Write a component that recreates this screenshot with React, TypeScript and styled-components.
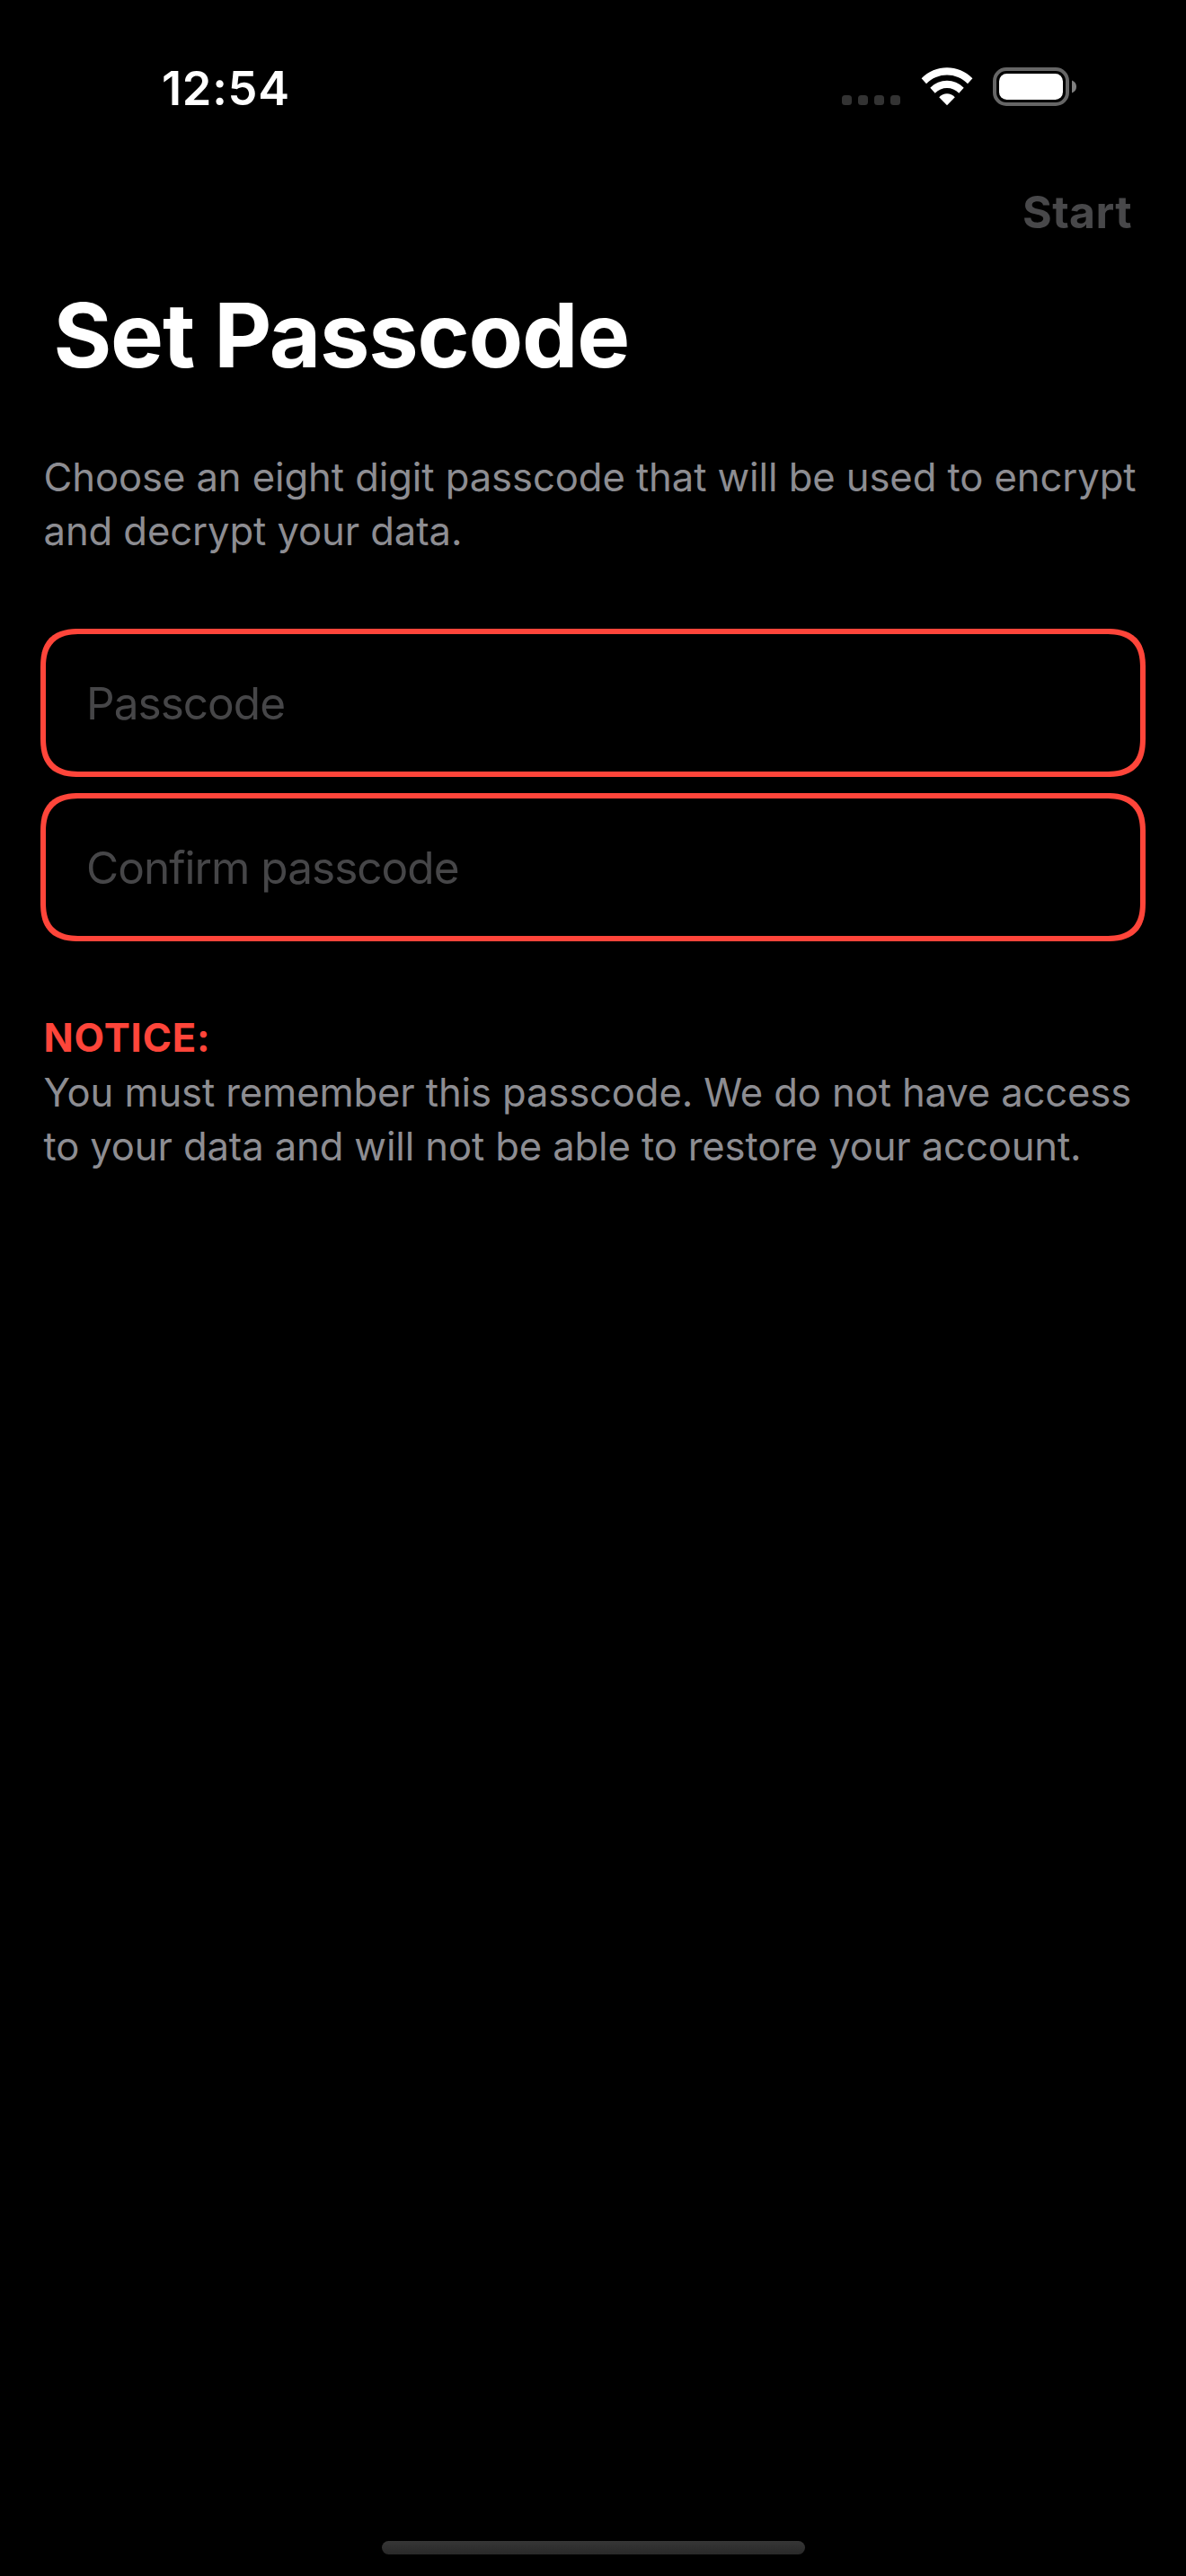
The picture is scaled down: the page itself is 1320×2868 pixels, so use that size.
import React, { useState } from "react";
import styled, { createGlobalStyle } from "styled-components";

const colors = {
  background: "#000000",
  title: "#ffffff",
  secondary: "#8d8d92",
  disabled: "#48484a",
  placeholder: "#464648",
  danger: "#ff453a",
};

const GlobalStyle = createGlobalStyle`
  html, body {
    margin: 0;
    background: ${colors.background};
  }
  * {
    box-sizing: border-box;
  }
`;

const Screen = styled.div`
  display: flex;
  flex-direction: column;
  width: 1320px;
  height: 2868px;
  overflow: hidden;
  background: ${colors.background};
  font-family: Inter, "Liberation Sans", sans-serif;
`;

const StatusBar = styled.header`
  display: flex;
  justify-content: space-between;
  align-items: flex-start;
  height: 177px;
  padding: 67px 121px 0 180px;
`;

const Clock = styled.time`
  font-size: 52.3px;
  font-weight: 600;
  line-height: 62px;
  letter-spacing: 0.75px;
  color: ${colors.title};
`;

const StatusIcons = styled.div`
  display: flex;
  align-items: flex-end;
  padding-top: 8px;
  height: 51px;
`;

const SignalDots = styled.div`
  display: flex;
  gap: 7px;
  margin: 0 23px 1px 0;
`;

const Dot = styled.span`
  width: 11px;
  height: 11px;
  border-radius: 3.5px;
  background: #333333;
`;

const WifiIcon = styled.svg`
  display: block;
  width: 58px;
  height: 43px;
  margin-right: 22px;
`;

const BatteryIcon = styled.svg`
  display: block;
  width: 94px;
  height: 43px;
`;

const NavBar = styled.nav`
  display: flex;
  justify-content: flex-end;
  height: 136px;
  padding: 29px 60px 0 0;
`;

const StartButton = styled.button`
  height: 60px;
  padding: 0;
  border: 0;
  background: none;
  font-family: inherit;
  font-size: 50px;
  font-weight: 700;
  line-height: 60px;
  letter-spacing: 0.4px;
  color: ${colors.disabled};
`;

const Title = styled.h1`
  margin: 0 0 69px;
  padding-left: 59.5px;
  font-size: 99px;
  font-weight: 700;
  line-height: 120px;
  letter-spacing: -1.21px;
  color: ${colors.title};
`;

const Form = styled.main`
  display: flex;
  flex-direction: column;
  flex: 1;
  gap: 78px;
  padding: 0 45px;
`;

const Paragraph = styled.p<{ $leading: number; $tracking: number }>`
  margin: 0;
  padding-left: 3.5px;
  font-size: 43.6px;
  line-height: ${(p) => p.$leading}px;
  letter-spacing: ${(p) => p.$tracking}px;
  white-space: nowrap;
  color: ${colors.secondary};
`;

const NoticeLabel = styled.strong`
  font-weight: 700;
  letter-spacing: 0.85px;
  color: ${colors.danger};
`;

const Fields = styled.div`
  display: flex;
  flex-direction: column;
  gap: 18px;
`;

const Field = styled.input`
  width: 100%;
  height: 165px;
  padding: 0 45px;
  border: 6px solid ${colors.danger};
  border-radius: 44px;
  corner-shape: superellipse(1.38);
  outline: none;
  background: transparent;
  font-family: inherit;
  font-size: 49.5px;
  letter-spacing: -0.97px;
  color: ${colors.title};

  &::placeholder {
    color: ${colors.placeholder};
    opacity: 1;
  }
`;

const HomeArea = styled.footer`
  display: flex;
  justify-content: center;
  padding-bottom: 24px;
`;

const HomeIndicator = styled.div`
  width: 471px;
  height: 15px;
  border-radius: 8px;
  background: linear-gradient(#363636, #292929);
`;

function Wifi() {
  return (
    <WifiIcon viewBox="0 0 58 43" fill="#fff" aria-label="Wi-Fi">
      <path d="M0.6 12.2C16 -3.9 42 -3.9 57.4 12.2L52 18.3C39.5 5.2 18.5 5.2 6 18.3Z" />
      <path d="M10.3 22.7C20.5 12 37.5 12 47.7 22.7L42.3 28.7C35 21.2 23 21.2 15.7 28.7Z" />
      <path d="M20.2 33.2C25 28 33 28 37.8 33.2L29 42.3Z" />
    </WifiIcon>
  );
}

function Battery() {
  return (
    <BatteryIcon viewBox="0 0 94 43" aria-label="Battery">
      <rect x="2" y="2" width="81" height="39" rx="13" fill="none" stroke="#666" strokeWidth="4" />
      <rect x="7" y="7" width="71" height="29" rx="8.5" fill="#fff" />
      <path d="M88 14.5Q93 16.5 93 21.5T88 28.5Z" fill="#808080" />
    </BatteryIcon>
  );
}

export default function App() {
  const [passcode, setPasscode] = useState("");
  const [confirmation, setConfirmation] = useState("");

  return (
    <Screen>
      <GlobalStyle />
      <StatusBar>
        <Clock>12:54</Clock>
        <StatusIcons>
          <SignalDots>
            <Dot />
            <Dot />
            <Dot />
            <Dot />
          </SignalDots>
          <Wifi />
          <Battery />
        </StatusIcons>
      </StatusBar>
      <NavBar>
        <StartButton disabled>Start</StartButton>
      </NavBar>
      <Title>Set Passcode</Title>
      <Form>
        <Paragraph $leading={60} $tracking={-0.09}>
          Choose an eight digit passcode that will be used to encrypt
          <br />
          and decrypt your data.
        </Paragraph>
        <Fields>
          <Field
            placeholder="Passcode"
            inputMode="numeric"
            value={passcode}
            onChange={(e) => setPasscode(e.target.value)}
          />
          <Field
            placeholder="Confirm passcode"
            inputMode="numeric"
            value={confirmation}
            onChange={(e) => setConfirmation(e.target.value)}
          />
        </Fields>
        <Paragraph $leading={60.5} $tracking={-0.13}>
          <NoticeLabel>NOTICE:</NoticeLabel>
          <br />
          You must remember this passcode. We do not have access
          <br />
          to your data and will not be able to restore your account.
        </Paragraph>
      </Form>
      <HomeArea>
        <HomeIndicator />
      </HomeArea>
    </Screen>
  );
}
